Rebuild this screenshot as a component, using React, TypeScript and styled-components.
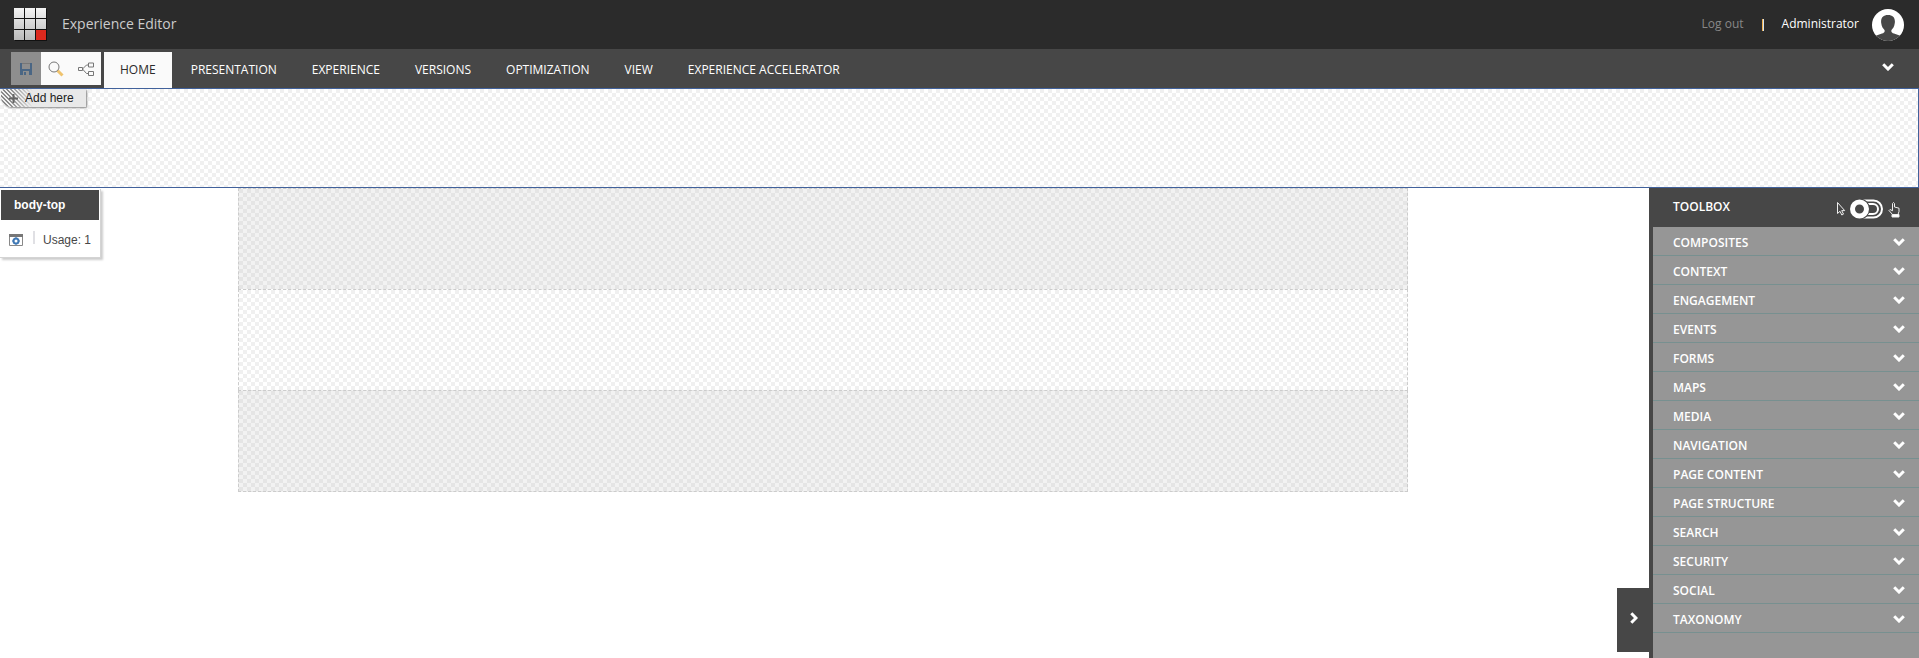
import React from "react";
import styled, { createGlobalStyle, css } from "styled-components";

const GlobalStyle = createGlobalStyle`
  *, *::before, *::after { box-sizing: border-box; }
  body { margin: 0; background: #fff; font-family: "Open Sans", "Noto Sans", sans-serif; font-size: 12px; color: #fff; }
  button { font: inherit; color: inherit; border: 0; padding: 0; background: none; cursor: pointer; }
  ul { list-style: none; margin: 0; padding: 0; }
  svg { display: block; flex: none; }
`;

const checker = (dark: string, light: string) => css`
  background: conic-gradient(${dark} 25%, ${light} 0 50%, ${dark} 0 75%, ${light} 0) 0 0 / 8px 8px;
`;

const Page = styled.div`
  display: flex;
  flex-direction: column;
  min-height: 100vh;
`;

const Header = styled.header`
  display: flex;
  align-items: center;
  justify-content: space-between;
  height: 49px;
  padding: 0 14px;
  background: #2b2b2b;
`;

const Brand = styled.div`
  display: flex;
  align-items: center;
  gap: 15px;
`;

const Title = styled.h1`
  margin: 0;
  padding-bottom: 2px;
  font-size: 14px;
  line-height: 20px;
  font-weight: 400;
  color: #ccc;
`;

const Account = styled.div`
  display: flex;
  align-items: center;
`;

const LogOut = styled.a`
  padding-bottom: 2px;
  color: #888;
  text-decoration: none;
`;

const Divider = styled.span`
  width: 2px;
  height: 12px;
  margin: 0 18px;
  background: linear-gradient(to right, #f0b050 50%, #d8e4ee 50%);
`;

const UserName = styled.span`
  margin-right: 12px;
  padding-bottom: 2px;
`;

const Ribbon = styled.nav`
  display: flex;
  align-items: flex-end;
  height: 40px;
  padding-left: 11px;
  background: #474747;
  border-bottom: 1px solid #41619b;
`;

const QuickActions = styled.div`
  display: flex;
  align-self: flex-start;
  margin: 3px 3px 0 0;
  height: 33px;
  background: #fafafa;
`;

const QuickButton = styled.button<{ $disabled?: boolean }>`
  display: grid;
  place-items: center;
  width: 30px;
  background: ${(p) => (p.$disabled ? "#8e8e8e" : "transparent")};
`;

const Tabs = styled.div`
  display: flex;
  flex: 1;
  gap: 3px;
`;

const Tab = styled.button<{ $active?: boolean }>`
  height: 36px;
  padding: 0 16px 2px;
  background: ${(p) => (p.$active ? "#fafafa" : "transparent")};
  color: ${(p) => (p.$active ? "#2b2b2b" : "#fff")};
`;

const RibbonToggle = styled.button`
  align-self: center;
  margin-right: 25px;
  padding-bottom: 3px;
`;

const HeaderPlaceholder = styled.section`
  height: 99px;
  border: solid #41619b;
  border-width: 0 1px 1px 0;
  ${checker("#fff", "#f0f0f0")}
`;

const AddHere = styled.button`
  display: flex;
  align-items: center;
  gap: 7px;
  height: 18px;
  margin-left: 1px;
  padding: 0 12px 0 8px;
  border-radius: 4px 0 0 10px;
  background: linear-gradient(to right, transparent 8px, #e9e9e9 32px),
    linear-gradient(45deg, #888 25%, #f0f0f0 25% 50%, #888 50% 75%, #f0f0f0 75%) 0 0 / 4px 4px;
  box-shadow: 1px 1px 2px #888;
  color: #222;
  font: 12px/16px "Liberation Sans", Arial, sans-serif;
`;

const Workspace = styled.main`
  position: relative;
  display: flex;
  flex: 1;
`;

const Canvas = styled.div`
  flex: 1;
  padding: 0 241px 0 238px;
`;

const Zone = styled.section<{ $shaded?: boolean }>`
  height: 101px;
  border: 1px dashed #ccc;
  border-bottom-width: 0;
  ${(p) => (p.$shaded ? checker("#f2f2f2", "#e5e5e5") : checker("#fff", "#f0f0f0"))}
  &:last-child {
    height: 102px;
    border-bottom-width: 1px;
  }
`;

const ZoneCard = styled.aside`
  position: absolute;
  top: 1px;
  left: 0;
  width: 101px;
  padding: 1px;
  border: solid #d4d4d4;
  border-width: 0 1px 1px 0;
  background: #fff;
  box-shadow: 2px 2px 2px rgba(0, 0, 0, 0.2);
  font-family: "Liberation Sans", Arial, sans-serif;
`;

const CardTitle = styled.h2`
  margin: 0;
  padding: 1px 13px 0;
  background: #474747;
  font-size: 12px;
  line-height: 29px;
`;

const CardBody = styled.div`
  display: flex;
  align-items: center;
  height: 36px;
  padding: 3px 0 0 8px;
  color: #474747;
`;

const CardRule = styled.span`
  width: 2px;
  height: 13px;
  margin: 0 8px 4px 10px;
  background: #e0e0e4;
`;

const Toolbox = styled.aside`
  display: flex;
  flex-direction: column;
  width: 270px;
  padding-left: 4px;
  background: #474747;
`;

const ToolboxHeader = styled.div`
  display: flex;
  align-items: center;
  justify-content: space-between;
  height: 39px;
  padding: 0 18px 0 20px;
`;

const ToolboxTitle = styled.h2`
  margin: 0;
  padding-bottom: 2px;
  font-size: 12px;
  line-height: 16px;
  font-weight: 600;
`;

const ModeSwitch = styled.button`
  display: flex;
  padding-top: 2px;
`;

const Groups = styled.ul`
  flex: 1;
  background: #969696;
`;

const Group = styled.button`
  display: flex;
  align-items: center;
  justify-content: space-between;
  width: 100%;
  height: 29px;
  padding: 2px 14px 0 20px;
  border-bottom: 1px solid #779090;
  font-weight: 600;
`;

const CollapseButton = styled.button`
  position: absolute;
  right: 270px;
  bottom: 6px;
  display: grid;
  place-items: center;
  width: 32px;
  height: 64px;
  padding: 0 0 4px 2px;
  background: #474747;
`;

const Chevron = ({ right = false }: { right?: boolean }) => (
  <svg width={right ? 8 : 12} height={right ? 12 : 8} fill="none" stroke="#fff" strokeWidth="3" aria-hidden="true">
    <path d={right ? "M1.3 1.2 6 6 1.3 10.8" : "M1.2 1.3 6 6l4.8-4.7"} />
  </svg>
);

const Logo = () => (
  <svg width="33" height="33" viewBox="0 0 33 33" role="img" aria-label="Home">
    <defs>
      <linearGradient id="tile" x1="0" y1="0" x2="0" y2="33" gradientUnits="userSpaceOnUse">
        <stop offset="0" stopColor="#f4f4f4" />
        <stop offset="1" stopColor="#b8b8b8" />
      </linearGradient>
    </defs>
    <path fill="#111" d="M1 1h32v32H1z" />
    {[0, 11, 22].map((y) =>
      [0, 11, 22].map((x) => (
        <rect key={`${x}-${y}`} x={x} y={y} width="10" height="10" fill={x + y === 44 ? "#dc291e" : "url(#tile)"} />
      ))
    )}
  </svg>
);

const Avatar = () => (
  <svg width="34" height="34" viewBox="0 0 34 34" role="img" aria-label="User portrait">
    <clipPath id="portrait"><circle cx="17" cy="17" r="16" /></clipPath>
    <g clipPath="url(#portrait)">
      <path fill="#fff" d="M0 0h34v34H0z" />
      <path fill="#474747" d="M17 7c-5 0-7.500 3-6.800 8 .4 4 2 5.500 3.300 7 .6 2-.5 3-2.500 3.600L4 28v6h26v-6l-7-2.400c-2-.6-3.100-1.600-2.500-3.600 1.300-1.500 2.900-3 3.300-7 .7-5-1.800-8-6.800-8z" />
    </g>
  </svg>
);

const SaveIcon = () => (
  <svg width="12" height="12" aria-hidden="true">
    <path fill="#4a6684" fillRule="evenodd" d="M0 0h12v12H0zM2 1h8v5H2zM3 8h6v4H6V9H4v3H3z" />
    <path fill="#777" d="M2 0h8v1H2z" />
  </svg>
);

const SearchIcon = () => (
  <svg width="16" height="16" fill="none" aria-hidden="true">
    <path d="m9.500 9.500 5 5" stroke="#efc36e" strokeWidth="3" />
    <circle cx="6" cy="6" r="5" stroke="#777" />
  </svg>
);

const NodesIcon = () => (
  <svg width="16" height="14" fill="none" stroke="#777" aria-hidden="true">
    <path d="M.5 5.500h4v3h-4zM10.500 1h5v4h-5zM10.500 9.500h5v4h-5zM4.500 7l4-4h2M4.500 7l4 4.500h2" />
  </svg>
);

const ComponentIcon = () => (
  <svg width="14" height="12" aria-hidden="true">
    <path fill="none" stroke="#888" d="M.5.5h13v11H.5z" />
    <path fill="#777" d="M0 0h14v3H0z" />
    <circle cx="7" cy="7" r="2.500" fill="none" stroke="#3f78b5" strokeWidth="2" />
    <path stroke="#3f78b5" d="M7 3v1.500M7 9.500V11M3 7h1.500M9.500 7H11" />
  </svg>
);

const ModeIcon = () => (
  <svg width="66" height="20" viewBox="0 0 66 20" fill="none" stroke="#eee" aria-hidden="true">
    <path d="M2.500 3.500v11l2.500-2.200 1.800 3.700 1.700-.9-1.800-3.500h3z" />
    <rect x="16" y="1.500" width="31" height="17" rx="8.500" stroke="#fff" strokeWidth="2" />
    <path d="M32 5h6a5 5 0 0 1 0 10h-6" stroke="#fff" strokeWidth="2" />
    <circle cx="24.500" cy="10" r="10.500" fill="#474747" stroke="none" />
    <circle cx="24.500" cy="10" r="7" stroke="#fff" strokeWidth="5" />
    <path d="M57.500 15.500 54 11.500l1-1 2.500 1.300V4.500q1-2 2 0V8l4.500 1.200v3.300l-1 3z" />
    <path fill="#fff" d="M57 15.500h7V18h-7z" />
  </svg>
);

const tabs = ["HOME", "PRESENTATION", "EXPERIENCE", "VERSIONS", "OPTIMIZATION", "VIEW", "EXPERIENCE ACCELERATOR"];

const groups = [
  "COMPOSITES", "CONTEXT", "ENGAGEMENT", "EVENTS", "FORMS", "MAPS", "MEDIA", "NAVIGATION",
  "PAGE CONTENT", "PAGE STRUCTURE", "SEARCH", "SECURITY", "SOCIAL", "TAXONOMY",
];

export default function App() {
  return (
    <Page>
      <GlobalStyle />
      <Header>
        <Brand>
          <Logo />
          <Title>Experience Editor</Title>
        </Brand>
        <Account>
          <LogOut href="#logout">Log out</LogOut>
          <Divider />
          <UserName>Administrator</UserName>
          <Avatar />
        </Account>
      </Header>
      <Ribbon>
        <QuickActions>
          <QuickButton $disabled aria-label="Save"><SaveIcon /></QuickButton>
          <QuickButton aria-label="Search"><SearchIcon /></QuickButton>
          <QuickButton aria-label="Navigate"><NodesIcon /></QuickButton>
        </QuickActions>
        <Tabs>
          {tabs.map((name, i) => (
            <Tab key={name} $active={i === 0}>{name}</Tab>
          ))}
        </Tabs>
        <RibbonToggle aria-label="Toggle ribbon"><Chevron /></RibbonToggle>
      </Ribbon>
      <HeaderPlaceholder>
        <AddHere>
          <svg width="9" height="9" stroke="#666" strokeWidth="2" aria-hidden="true">
            <path d="M4.500 0v9M0 4.500h9" />
          </svg>
          Add here
        </AddHere>
      </HeaderPlaceholder>
      <Workspace>
        <Canvas>
          <Zone $shaded />
          <Zone />
          <Zone $shaded />
        </Canvas>
        <ZoneCard>
          <CardTitle>body-top</CardTitle>
          <CardBody>
            <ComponentIcon />
            <CardRule />
            Usage: 1
          </CardBody>
        </ZoneCard>
        <Toolbox>
          <ToolboxHeader>
            <ToolboxTitle>TOOLBOX</ToolboxTitle>
            <ModeSwitch aria-label="Switch mode"><ModeIcon /></ModeSwitch>
          </ToolboxHeader>
          <Groups>
            {groups.map((name) => (
              <li key={name}>
                <Group>{name}<Chevron /></Group>
              </li>
            ))}
          </Groups>
        </Toolbox>
        <CollapseButton aria-label="Collapse toolbox"><Chevron right /></CollapseButton>
      </Workspace>
    </Page>
  );
}
